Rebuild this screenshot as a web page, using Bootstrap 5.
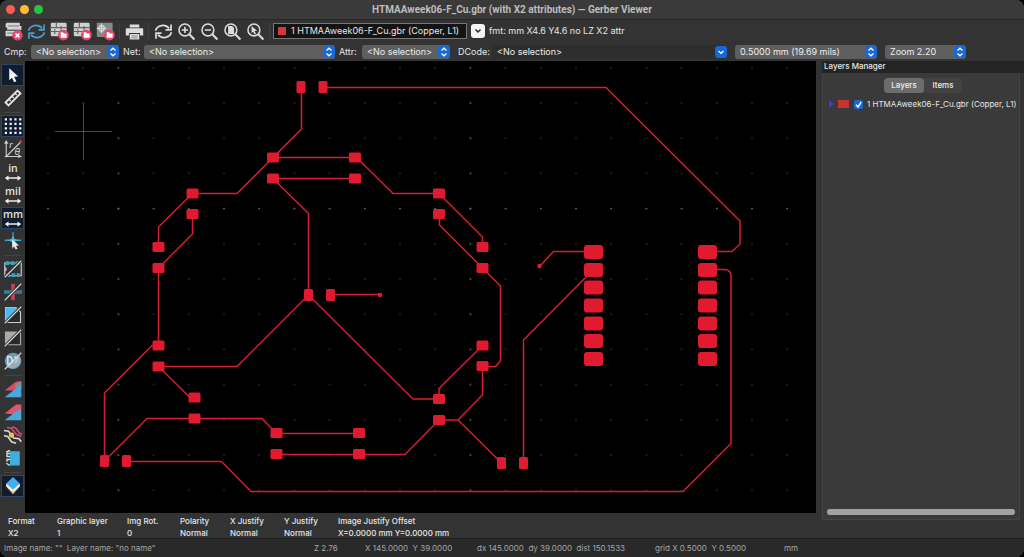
<!DOCTYPE html>
<html lang="en" data-bs-theme="dark">
<head>
<meta charset="utf-8">
<meta name="viewport" content="width=device-width, initial-scale=1">
<title>Gerber Viewer</title>
<link href="https://cdn.jsdelivr.net/npm/bootstrap@5.3.0/dist/css/bootstrap.min.css" rel="stylesheet">
<style>
body{background:#000;font-family:Inter,"Liberation Sans",sans-serif;font-size:9px;line-height:12px;color:#e6e6e6}
.app{background:#333;border-radius:8px;overflow:hidden;white-space:nowrap}
.titlebar{height:20px;background:#3a3a3a;border-bottom:1px solid #262626;font-family:Roboto,"Liberation Sans",sans-serif;font-size:10px;font-weight:700;color:#bdbdbd;display:grid;grid-template-columns:1fr auto 1fr;align-items:center}
.lights{gap:5px;padding-left:6px}
.light{width:9px;height:9px;border-radius:50%;border:0;padding:0}
.light.close-w{background:#ff5b55}.light.min-w{background:#fdbb2f}.light.max-w{background:#27c53f}
.tools{height:22px;padding-left:2px}
.tool{width:23px;height:22px;padding:0;border:0;background:none;display:flex;align-items:center;justify-content:center;color:#dcdcdc}
.tool svg{width:19px;height:19px;flex:none;overflow:visible}
.tool.reload{color:#4a9cc9}
.vsep{width:1px;height:16px;background:#404040;margin:0 3px 0 2px}
.layerbox{width:194px;height:16px;border:1px solid #777;background:#141414;padding:0 4px;gap:5px}
.swatch{width:8px;height:8px;background:#d8343c;flex:none}
.openbtn{width:14px;height:14px;border:0;border-radius:3px;background:#f4f4f4;padding:0;display:flex;align-items:center;justify-content:center}
.fields{height:19px}
.pick{appearance:none;height:14px;border:0;border-radius:3px;color:#eee;padding:0 14px 0 5px;line-height:14px;font-size:9px;
 background:#5f5f5f url("data:image/svg+xml,%3Csvg xmlns='http://www.w3.org/2000/svg' width='12' height='14'%3E%3Crect y='1' width='12' height='12' rx='3' fill='%231769d8'/%3E%3Cpath d='M3.500 5.500L6 3.200l2.500 2.300M3.500 8.500L6 10.800l2.500-2.300' fill='none' stroke='white' stroke-width='1.300'/%3E%3C/svg%3E") no-repeat right 0 center}
.pick.combo{background:#2e2e2e url("data:image/svg+xml,%3Csvg xmlns='http://www.w3.org/2000/svg' width='12' height='14'%3E%3Crect y='1' width='12' height='12' rx='3' fill='%231769d8'/%3E%3Cpath d='M3.500 6L6 8.300l2.500-2.300' fill='none' stroke='white' stroke-width='1.300'/%3E%3C/svg%3E") no-repeat right 0 center}
.w-cmp{width:88px}.w-net{width:191px}.w-dcode{width:235px;margin-left:3px}.w-grid{width:142px}.w-zoom{width:81px}
.side{width:25px;padding-top:3px;background:#333}
.side .tool{margin:0 auto 1px 1px}
.side .tool svg{width:18px;height:18px}
.side .tool.on{background:#101c2f;box-shadow:inset 0 0 0 1px #2c4763}
.hsep{height:1px;width:17px;background:#444;margin:3px 0 2px 4px}
.unit text{font:600 14px "Open Sans",sans-serif;fill:#e4e4e4;text-anchor:middle}
.board{background:#000;min-width:0;overflow:hidden}
.board svg{width:100%;height:100%;display:block}
.panel{width:202px;margin-left:6px;font-size:8px}
.panelhead{height:12px;background:#242424;padding-left:2px;line-height:11px;font-weight:500}
.panelbody{background:#3a3a3a;border:1px solid #444;border-top:0;margin:0 4px 18px 0}
.seg{background:#424242;border-radius:4px;height:15px;margin:5px 0 0 4px}
.seg button{border:0;background:none;color:#eee;border-radius:4px;font-size:8px;line-height:13px;padding:0;width:38px;font-weight:500}
.seg button.on{background:#6c6c6c;width:40px}
.layerrow{gap:4px;padding:5px 0 0 6px}
.tri{width:0;height:0;border:4px solid transparent;border-left:5px solid #3a3fd0;border-right:0}
.layerswatch{width:11px;height:8px;background:#c8322f;flex:none}
.tick{width:9px;height:9px;flex:none;margin:0 0 0 1px;appearance:none;border-radius:2px;background:#1b66dc url("data:image/svg+xml,%3Csvg xmlns='http://www.w3.org/2000/svg' viewBox='0 0 9 9'%3E%3Cpath d='M2 4.800L4 7l3.200-5' fill='none' stroke='white' stroke-width='1.400'/%3E%3C/svg%3E")}
.thumb{height:6px;border-radius:3px;background:#a2a2a2;margin:0 4px 4px 4px}
.info{height:25px;font-size:8px;padding:2px 0 0 8px}
.info dl{margin:0}.info dt,.info dd{margin:0;font-weight:500;line-height:12px}
.status{height:19px;background:#292929;border-top:1px solid #1d1d1d;color:#a6a6a6;font-size:8px;padding-left:4px;white-space:pre}
</style>
</head>
<body>
<svg width="0" height="0" class="position-absolute" aria-hidden="true">
<defs>
<symbol id="lens" viewBox="0 0 24 24"><circle cx="10" cy="10" r="7.500" fill="none" stroke="#d9d9d9" stroke-width="2"/><path d="M15.500 15.500L22 22" stroke="#d9d9d9" stroke-width="2.800"/></symbol>
<symbol id="cycle" viewBox="0 0 24 24"><path d="M2 11C4 4 14 2 19 8M22 13C20 20 10 22 5 16" fill="none" stroke="currentColor" stroke-width="2.200"/><path d="M21.500 3v7h-7M2.500 21v-7h7" fill="none" stroke="currentColor" stroke-width="2.200"/></symbol>
<symbol id="filestack" viewBox="0 0 24 24"><rect x="1" y="1" width="20" height="17" rx="1.500" fill="#cfcfcf"/><path d="M1 7h20M1 12h14M8 1v6M14 5v7M6 9v6" stroke="#656565" stroke-width="1.500"/></symbol>
<symbol id="folder" viewBox="0 0 24 24"><circle cx="17" cy="16.500" r="6.800" fill="#e8456b"/><path d="M13.500 13h3l1 1.500h3.500V20h-7.500z" fill="#fff"/></symbol>
<symbol id="arrows" viewBox="0 0 24 24"><path d="M4 20h16" stroke="#eee" stroke-width="2"/><path d="M1 20l5-3.500v7zM23 20l-5-3.500v7z" fill="#eee"/></symbol>
<symbol id="slash" viewBox="0 0 24 24"><path d="M1 23L23 1" stroke="#292929" stroke-width="4"/><path d="M1 23L23 1" stroke="#ddd" stroke-width="1.500"/></symbol>
<pattern id="dots" x="100.800" y="191" width="35.200" height="35.200" patternUnits="userSpaceOnUse"><rect x="17" y="17" width="1.200" height="1.200" fill="#494949"/></pattern>
<pattern id="brightrows" x="100.800" y="191" width="35.200" height="352" patternUnits="userSpaceOnUse"><rect x="17" y="17" width="1.200" height="1.200" fill="#858585"/></pattern>
<pattern id="brightcols" x="100.800" y="191" width="352" height="35.200" patternUnits="userSpaceOnUse"><rect x="17" y="17" width="1.200" height="1.200" fill="#787878"/></pattern>
<rect id="ph" x="-6" y="-5" width="12" height="10" rx="1.500"/>
<rect id="pv" x="-4.500" y="-6" width="9" height="12" rx="1.500"/>
<rect id="pb" x="-9.500" y="-7" width="19" height="14" rx="3"/>
</defs>
</svg>
<div class="app vh-100 d-flex flex-column">
<header class="titlebar">
<div class="lights d-flex"><button class="light close-w" aria-label="Close"></button><button class="light min-w" aria-label="Minimise"></button><button class="light max-w" aria-label="Zoom"></button></div>
<div>HTMAAweek06-F_Cu.gbr (with X2 attributes) — Gerber Viewer</div>
</header>
<div class="tools d-flex align-items-center">
<button class="tool" aria-label="Clear layers"><svg viewBox="0 0 24 24"><path d="M3 1h17v4h2v5H4V7H2V3zM2 11h19v7H2z" fill="#d4d4d4"/><path d="M5 5h14M4 10h16M4 14h16" stroke="#777" stroke-width="1.200"/><circle cx="17" cy="17" r="6.500" fill="#e8456b"/><path d="M14.500 14.500l5 5m0-5l-5 5" stroke="#fff" stroke-width="2"/></svg></button>
<button class="tool reload" aria-label="Reload"><svg><use href="#cycle"/></svg></button>
<button class="tool" aria-label="Open file"><svg viewBox="0 0 24 24"><use href="#filestack"/><use href="#folder"/></svg></button>
<button class="tool" aria-label="Open Gerber"><svg viewBox="0 0 24 24"><use href="#filestack"/><use href="#folder"/></svg></button>
<button class="tool" aria-label="Open drill file"><svg viewBox="0 0 24 24"><rect x="1" y="1" width="20" height="18" rx="1" fill="#888"/><circle cx="7" cy="8" r="3.500" fill="none" stroke="#ddd" stroke-width="1.500"/><path d="M7 2v12M1 8h12" stroke="#ddd" stroke-width="1.500"/><use href="#folder"/></svg></button>
<span class="vsep"></span>
<button class="tool" aria-label="Print"><svg viewBox="0 0 24 24"><path d="M6 3h12v4H6zM2 8h20a1 1 0 011 1v8h-4v-3H5v3H1V9a1 1 0 011-1zM6 15h12v7H6z" fill="#dedede"/><path d="M8 17.500h8M8 20h8" stroke="#777"/></svg></button>
<span class="vsep"></span>
<button class="tool" aria-label="Refresh"><svg><use href="#cycle"/></svg></button>
<button class="tool" aria-label="Zoom in"><svg viewBox="0 0 24 24"><use href="#lens"/><path d="M10 6v8M6 10h8" stroke="#ddd" stroke-width="2"/></svg></button>
<button class="tool" aria-label="Zoom out"><svg viewBox="0 0 24 24"><use href="#lens"/><path d="M6 10h8" stroke="#ddd" stroke-width="2"/></svg></button>
<button class="tool" aria-label="Zoom to page"><svg viewBox="0 0 24 24"><use href="#lens"/><path d="M6.500 5h5l2.500 2.500V15H6.500z" fill="#ddd"/></svg></button>
<button class="tool" aria-label="Zoom to selection"><svg viewBox="0 0 24 24"><use href="#lens"/><path d="M7 5l7 6-3.200.3 1.800 3.500-1.800.9-1.700-3.500L7 14z" fill="#ddd"/></svg></button>
<span class="vsep"></span>
<div class="layerbox d-flex align-items-center"><span class="swatch"></span><span>1 HTMAAweek06-F_Cu.gbr (Copper, L1)</span></div>
<button class="openbtn ms-1" aria-label="Choose layer"><svg width="8" height="6" viewBox="0 0 8 6"><path d="M1.500 1.500L4 4l2.500-2.500" fill="none" stroke="#222" stroke-width="1.400"/></svg></button>
<span class="ms-1">fmt: mm X4.6 Y4.6 no LZ X2 attr</span>
</div>
<div class="fields d-flex align-items-center ps-1">
<label for="cmp" style="width:27px">Cmp:</label><select id="cmp" class="pick w-cmp"><option>&lt;No selection&gt;</option></select>
<label for="net" class="ps-1" style="width:25px">Net:</label><select id="net" class="pick w-net"><option>&lt;No selection&gt;</option></select>
<label for="attr" class="ps-1" style="width:27px">Attr:</label><select id="attr" class="pick w-cmp"><option>&lt;No selection&gt;</option></select>
<label for="dcode" class="ps-1 ms-1" style="width:35px">DCode:</label><select id="dcode" class="pick combo w-dcode"><option>&lt;No selection&gt;</option></select>
<select aria-label="Grid" class="pick w-grid ms-2"><option>0.5000 mm (19.69 mils)</option></select>
<select aria-label="Zoom" class="pick w-zoom ms-2"><option>Zoom 2.20</option></select>
</div>
<main class="d-flex flex-grow-1" style="min-height:0">
<div class="d-flex flex-column flex-grow-1" style="min-width:0">
<div class="d-flex flex-grow-1" style="min-height:0">
<nav class="side flex-shrink-0" aria-label="Tools">
<button class="tool on" aria-label="Select"><svg viewBox="0 0 24 24"><path d="M7 3l12 11-5.500.3 3 6-3 1.400-2.800-6L7 19z" fill="#f3f3f3"/></svg></button>
<button class="tool" aria-label="Measure"><svg viewBox="0 0 24 24"><path d="M2 18L18 2l4 4L6 22z" fill="none" stroke="#e4e4e4" stroke-width="2.400"/><path d="M7 14l2 2M11 10l2 2M15 6l2 2" stroke="#e4e4e4" stroke-width="1.700"/></svg></button>
<div class="hsep"></div>
<button class="tool on" aria-label="Grid"><svg viewBox="0 0 24 24"><path d="M1 3h23M1 9h23M1 15h23M1 21h23" stroke="#f2f2f2" stroke-width="3" stroke-dasharray="3 3.400"/></svg></button>
<button class="tool" aria-label="Polar coordinates"><svg viewBox="0 0 24 24"><path d="M3 23V2M1 22h22M3 22L22 3" stroke="#ccc" stroke-width="1.500" fill="none"/><path d="M0 5l3-5 3 5zM19 19l5 3-5 2z" fill="#ccc"/><circle cx="22" cy="2" r="1.800" fill="#e33"/><text x="7" y="11" fill="#ddd" font-size="12" font-style="italic">r</text><text x="14" y="20" fill="#ddd" font-size="12" font-style="italic">θ</text></svg></button>
<button class="tool unit" aria-label="Inches"><svg viewBox="0 0 24 24"><text x="12" y="12">in</text><use href="#arrows"/></svg></button>
<button class="tool unit" aria-label="Mils"><svg viewBox="0 0 24 24"><text x="12" y="12">mil</text><use href="#arrows"/></svg></button>
<button class="tool on unit" aria-label="Millimetres"><svg viewBox="0 0 24 24"><text x="12" y="12">mm</text><use href="#arrows"/></svg></button>
<button class="tool" aria-label="Cursor shape"><svg viewBox="0 0 24 24"><path d="M12 0v22M1 11h22" stroke="#37a5cf" stroke-width="1.700"/><path d="M12 5l2 4 5 2-5 2-2 4-2-4-5-2 5-2z" fill="#42b8e6"/><path d="M11 10l9 8-4 .4 2 4-2.400 1-2-4L11 21z" fill="#f4e9ed"/></svg></button>
<div class="hsep"></div>
<button class="tool" aria-label="Sketch flashed items"><svg viewBox="0 0 24 24"><path d="M1 4h22v17H1zM1 10q4 2 0 5" fill="none" stroke="#ccc" stroke-width="1.500"/><path d="M2 4h20M3 20h18" stroke="#36a3ca" stroke-width="5" stroke-dasharray="5 2"/><use href="#slash"/></svg></button>
<button class="tool" aria-label="Sketch lines"><svg viewBox="0 0 24 24"><path d="M12 1v22" stroke="#bf3f58" stroke-width="5"/><path d="M0 12h24" stroke="#4b9fc0" stroke-width="4"/><path d="M0 12h24" stroke="#333"/><use href="#slash"/></svg></button>
<button class="tool" aria-label="Sketch polygons"><svg viewBox="0 0 24 24"><path d="M2 2h14l6 6v14H2z" fill="#292929" stroke="#ccc" stroke-width="1.500"/><path d="M2 2h14l4 4L2 22z" fill="#4fb8ec"/><use href="#slash"/></svg></button>
<button class="tool" aria-label="Negative objects"><svg viewBox="0 0 24 24"><path d="M2 4h20v17H2z" fill="#292929" stroke="#aaa" stroke-width="1.500"/><path d="M2 4h19L2 21z" fill="#aaa"/><use href="#slash"/></svg></button>
<button class="tool" aria-label="Show D codes"><svg viewBox="0 0 24 24"><circle cx="12" cy="12" r="11" fill="#619ab1"/><path d="M5 6v10h2q4-1 4-5t-4-5zM14 6l4 3-3 6" fill="none" stroke="#ddd" stroke-width="2.200"/><path d="M4 20L20 4q6 9-2 15-7 5-14 1" fill="#b9b9b9" opacity=".6"/><path d="M1 23L23 1" stroke="#ddd" stroke-width="1.500"/></svg></button>
<div class="hsep"></div>
<button class="tool" aria-label="Diff mode"><svg viewBox="0 0 24 24"><path d="M1 14L16 2h7v9L12 14z" fill="#d44d65"/><path d="M15 6l8-5v10h-8z" fill="#8c8c91"/><path d="M1 23L15 12l8-5v16z" fill="#47aadd"/></svg></button>
<button class="tool" aria-label="XOR mode"><svg viewBox="0 0 24 24"><path d="M1 14L16 2h7v7L12 15z" fill="#df5570"/><path d="M1 23L15 12l8-4v15z" fill="#47aadd"/></svg></button>
<button class="tool" aria-label="High contrast"><svg viewBox="0 0 24 24"><path d="M4 2l6 1 6 8 7 3M11 1l5 2 4 6 4 2" stroke="#cf526e" stroke-width="2" fill="none"/><path d="M0 6l6 1 7 9 7 1 3 4M0 13l5 1 5 7 6 2" fill="none" stroke="#ddd" stroke-width="2"/><circle cx="10" cy="12" r="3.500" fill="#f4bd54"/></svg></button>
<button class="tool" aria-label="Flip board"><svg viewBox="0 0 24 24"><path d="M8 3h13v19H8z" fill="#3eb0df"/><path d="M3 4l5-2M3 19l5 3M8 6H4v4h4M8 14H4v3" fill="none" stroke="#ddd" stroke-width="1.800"/></svg></button>
<div class="hsep"></div>
<button class="tool on" aria-label="Layers manager"><svg viewBox="0 0 24 24"><path d="M3 13l9 10 9-10v-3H3z" fill="#e5b96e"/><path d="M3 12l9 8 9-8v-3H3z" fill="#f4f4f4"/><path d="M12 0l9 8.500L12 17 3 8.500z" fill="#43aef0"/></svg></button>
</nav>
<div class="board flex-grow-1">
<svg viewBox="25 61 791 452" preserveAspectRatio="xMinYMin slice" role="img" aria-label="Copper layer">
<path d="M25 61h791v452H25z" fill="url(#dots)"/><path d="M25 61h791v452H25z" fill="url(#brightrows)"/><path d="M25 61h791v452H25z" fill="url(#brightcols)"/>
<path d="M55 131.500h57M83.500 103v57" stroke="#484848"/>
<g fill="none" stroke="#d51e32" stroke-width="1.500" stroke-linejoin="round">
<path d="M301.500 87V129L273 157.500H355L357 158L393 193.500H439L482.500 237V247"/>
<path d="M273 157.500L237 193.500H192.500L158.500 227V247M192.500 214V234L158.500 268V345.500H152L104.500 393V461L147 418.500H262L276.500 433.500H359"/>
<path d="M276.500 454.500H405L439 420H458L482.500 395V366M458 420L501.500 463"/>
<path d="M355 178.500H273L308.500 213.500V295L237 366.500H158.500L190 397.500M308.500 295L413 399H439V388.500L482.500 345.500"/>
<path d="M330 294.500H380M439.500 214V225L482.500 268L500.500 286V361L495.500 366.500H482.500M593 251.500H553.500L540 266M593 270L523.500 340V463"/>
<path d="M323 87.500H606L740 221V244L732 251.500H707M707 269.500H725Q731 270 731 276V443.500L683 491.500H251L221.500 461.500H126"/>
</g>
<g fill="#e01b30">
<circle cx="380" cy="295" r="2.200"/><circle cx="539.500" cy="266" r="2.200"/>
<use href="#pv" x="301" y="87"/><use href="#pv" x="323" y="87"/><use href="#pv" x="308.500" y="295"/><use href="#pv" x="330.500" y="295"/><use href="#pv" x="104.500" y="461"/><use href="#pv" x="126.500" y="461"/><use href="#pv" x="501.500" y="463"/><use href="#pv" x="523.500" y="463"/>
<use href="#ph" x="273" y="157.500"/><use href="#ph" x="355" y="157.500"/><use href="#ph" x="273" y="178.500"/><use href="#ph" x="355" y="178.500"/><use href="#ph" x="192.500" y="193.500"/><use href="#ph" x="192.500" y="214"/><use href="#ph" x="439" y="193.500"/><use href="#ph" x="439" y="214"/><use href="#ph" x="158.500" y="247"/><use href="#ph" x="158.500" y="268"/><use href="#ph" x="482.500" y="247"/><use href="#ph" x="482.500" y="268"/><use href="#ph" x="158.500" y="345.500"/><use href="#ph" x="158.500" y="366.500"/><use href="#ph" x="482.500" y="345.500"/><use href="#ph" x="482.500" y="366"/><use href="#ph" x="194.500" y="397.500"/><use href="#ph" x="194.500" y="418.500"/><use href="#ph" x="439" y="399"/><use href="#ph" x="439" y="420"/><use href="#ph" x="276.500" y="433"/><use href="#ph" x="276.500" y="454"/><use href="#ph" x="359" y="433"/><use href="#ph" x="359" y="454"/>
<g id="header7"><use href="#pb" x="593.500" y="252"/><use href="#pb" x="593.500" y="270"/><use href="#pb" x="593.500" y="287.500"/><use href="#pb" x="593.500" y="305.500"/><use href="#pb" x="593.500" y="323.500"/><use href="#pb" x="593.500" y="341"/><use href="#pb" x="593.500" y="359"/></g>
<use href="#header7" x="114"/>
</g>
</svg>
</div>
</div>
<div class="info d-flex flex-shrink-0">
<dl style="width:49px"><dt>Format</dt><dd>X2</dd></dl>
<dl style="width:70px"><dt>Graphic layer</dt><dd>1</dd></dl>
<dl style="width:53px"><dt>Img Rot.</dt><dd>0</dd></dl>
<dl style="width:50px"><dt>Polarity</dt><dd>Normal</dd></dl>
<dl style="width:54px"><dt>X Justify</dt><dd>Normal</dd></dl>
<dl style="width:54px"><dt>Y Justify</dt><dd>Normal</dd></dl>
<dl><dt>Image Justify Offset</dt><dd>X=0.0000 mm Y=0.0000 mm</dd></dl>
</div>
</div>
<aside class="panel flex-shrink-0 d-flex flex-column">
<div class="panelhead">Layers Manager</div>
<div class="panelbody flex-grow-1 d-flex flex-column">
<div class="seg align-self-center d-flex" role="tablist"><button class="on" role="tab" aria-selected="true">Layers</button><button role="tab" aria-selected="false">Items</button></div>
<div class="layerrow d-flex align-items-center flex-shrink-0"><span class="tri"></span><span class="layerswatch"></span><input class="tick" type="checkbox" id="ly1" checked><label for="ly1">1 HTMAAweek06-F_Cu.gbr (Copper, L1)</label></div>
<div class="thumb mt-auto"></div>
</div>
</aside>
</main>
<footer class="status d-flex align-items-center flex-shrink-0"><span style="width:310px">Image name: ""  Layer name: "no name"</span><span style="width:51px">Z 2.76</span><span style="width:112px">X 145.0000  Y 39.0000</span><span style="width:178px">dx 145.0000  dy 39.0000  dist 150.1533</span><span style="width:129px">grid X 0.5000  Y 0.5000</span><span>mm</span></footer>
</div>
<script src="https://cdn.jsdelivr.net/npm/bootstrap@5.3.0/dist/js/bootstrap.bundle.min.js"></script>
</body>
</html>
